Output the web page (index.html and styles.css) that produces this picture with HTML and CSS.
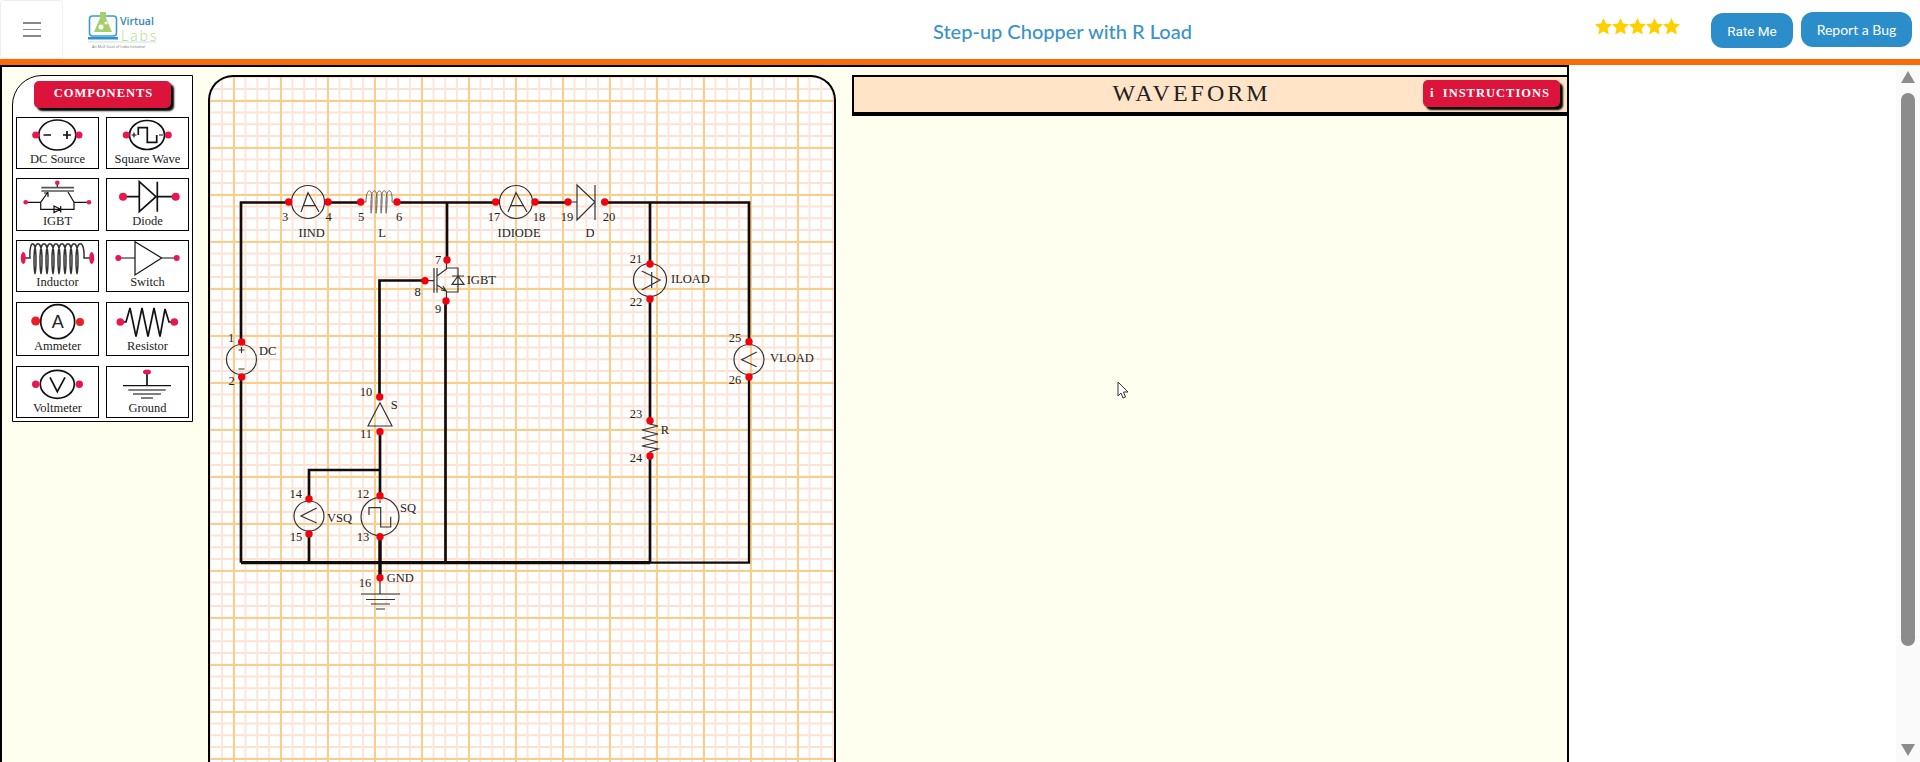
FILE: index.html
```html
<!DOCTYPE html>
<html lang="en">
<head>
    <meta charset="UTF-8">
    <title>Step-up Chopper with R Load</title>
    <link rel="stylesheet" href="styles.css">
</head>
<body>
    <header class="navbar">
        <button class="toggler" aria-label="Menu"><span></span><span></span><span></span></button>
        <svg class="logo" viewBox="86 9 72 40" width="72" height="40">
            <rect x="89.5" y="15" width="27" height="20" rx="3" fill="none" stroke="#3a9dd2" stroke-width="1.6"/>
            <path d="M100 11 H106 V17 L112 31 H94 L100 17 Z" fill="#a5cf6a"/>
            <circle cx="101" cy="26" r="2.5" fill="#fff"/>
            <circle cx="106" cy="22" r="1.5" fill="#fff"/>
            <rect x="88" y="36" width="30" height="2.5" fill="#2f93cb"/>
            <line x1="88" y1="41" x2="156" y2="41" stroke="#cfe3ea"/>
            <text x="120" y="24" class="logo-virtual">Virtual</text>
            <text x="121" y="39.5" class="logo-labs">Labs</text>
            <text x="92" y="47" class="logo-tag">An MoE Govt of India Initiative</text>
        </svg>
        <div class="title">Step-up Chopper with R Load</div>
        <svg class="stars" viewBox="0 0 85 17" width="85" height="17">
            <defs><polygon id="star" points="8.5,0 11,5.6 17,6.3 12.5,10.4 13.8,16.5 8.5,13.4 3.2,16.5 4.5,10.4 0,6.3 6,5.6"/></defs>
            <use href="#star" x="0"/><use href="#star" x="17"/><use href="#star" x="34"/><use href="#star" x="51"/><use href="#star" x="68"/>
        </svg>
        <a class="pill rate">Rate Me</a>
        <a class="pill bug">Report a Bug</a>
    </header>

    <div class="page">
        <main class="sim">
            <aside class="components">
                <button class="red-btn comp-btn">COMPONENTS</button>
                <div class="tiles">
                    <div class="tile">
                        <svg viewBox="0 0 81 38">
                            <ellipse cx="40.3" cy="17" rx="18.5" ry="15" class="ico"/>
                            <circle cx="18.7" cy="17" r="3.5" class="pin"/><circle cx="62" cy="17" r="3.5" class="pin"/>
                            <path d="M26.5 17 H34 M46 17 H54 M50 13 V21" class="ico"/>
                        </svg>
                        <span>DC Source</span>
                    </div>
                    <div class="tile">
                        <svg viewBox="0 0 81 38">
                            <ellipse cx="40" cy="17" rx="17.5" ry="14.5" class="ico"/>
                            <circle cx="19.3" cy="17" r="3.5" class="pin"/><circle cx="61.3" cy="17" r="3.5" class="pin"/>
                            <path d="M31.3 17 V9.7 H40.3 V24.3 H49.7 V17" class="ico"/>
                            <path d="M24.5 17 H29.5 M27 14.5 V19.5 M52 17 H56" class="ico thin"/>
                        </svg>
                        <span>Square Wave</span>
                    </div>
                    <div class="tile">
                        <svg viewBox="0 0 81 38">
                            <path d="M40.3 4 V8 M8.7 23.3 H23.7 L31 13 M23.7 23.3 V30.3 H57 V23.3 H72 M57 23.3 L51 13 M37 27 L43.7 30.3 L37 33.6 Z M43.7 27 V33.6 M27 14 H31 V18" class="ico thin"/>
                            <path d="M24.3 8.7 H57 M24.3 12 H57" class="bar"/>
                            <circle cx="40.3" cy="3.7" r="2.3" class="pin"/><circle cx="8.7" cy="23.3" r="2.3" class="pin"/><circle cx="72" cy="23.3" r="2.3" class="pin"/>
                        </svg>
                        <span>IGBT</span>
                    </div>
                    <div class="tile">
                        <svg viewBox="0 0 81 38">
                            <path d="M16 17.7 H32.3 M50.3 17.7 H68.7 M50.3 2.7 V32.7 M32.3 2.7 L49 17.7 L32.3 32.7 Z" class="ico"/>
                            <circle cx="16" cy="17.7" r="4" class="pin"/><circle cx="68.7" cy="17.7" r="4" class="pin"/>
                        </svg>
                        <span>Diode</span>
                    </div>
                    <div class="tile">
                        <svg viewBox="0 0 81 38">
                            <path d="M8 17 H13 C12 -2 19 -2 19 17 C19 38 17 38 17 17 C17 -2 25 -2 25 17 C25 38 23 38 23 17 C23 -2 31 -2 31 17 C31 38 29 38 29 17 C29 -2 37 -2 37 17 C37 38 35 38 35 17 C35 -2 43 -2 43 17 C43 38 41 38 41 17 C41 -2 49 -2 49 17 C49 38 47 38 47 17 C47 -2 55 -2 55 17 C55 38 53 38 53 17 C53 -2 61 -2 61 17 C61 38 59 38 59 17 C59 -2 68 -2 67 17 H73" class="ico coil"/>
                            <ellipse cx="6.3" cy="17" rx="2.5" ry="6" class="pin"/><ellipse cx="74.7" cy="17" rx="2.5" ry="6" class="pin"/>
                        </svg>
                        <span>Inductor</span>
                    </div>
                    <div class="tile">
                        <svg viewBox="0 0 81 38">
                            <path d="M11.3 17 H28 M54.7 17 H69.7 M28 0.7 L54.7 17 L28 34 Z" class="ico thin"/>
                            <circle cx="11.3" cy="17" r="3" class="pin"/><circle cx="69.7" cy="17" r="3" class="pin"/>
                        </svg>
                        <span>Switch</span>
                    </div>
                    <div class="tile">
                        <svg viewBox="0 0 81 38">
                            <circle cx="40.7" cy="18.7" r="17" class="ico"/>
                            <text x="40.7" y="25" class="ammeter-a">A</text>
                            <circle cx="18.7" cy="18" r="4.5" class="pin red"/><circle cx="63" cy="19" r="4" class="pin red"/>
                        </svg>
                        <span>Ammeter</span>
                    </div>
                    <div class="tile">
                        <svg viewBox="0 0 81 38">
                            <path d="M13.3 19 H19 L23 5 L29 33.7 L35 5 L41 33.7 L47 5 L53 33.7 L58 6 L62 19 H67" class="ico"/>
                            <circle cx="13.3" cy="19" r="3.8" class="pin"/><circle cx="67.3" cy="19" r="3.8" class="pin"/>
                        </svg>
                        <span>Resistor</span>
                    </div>
                    <div class="tile">
                        <svg viewBox="0 0 81 38">
                            <ellipse cx="40.3" cy="17.3" rx="17" ry="14" class="ico"/>
                            <path d="M33 10.3 L40.3 24.7 L48 10.3" class="ico"/>
                            <circle cx="18.7" cy="17.3" r="3.7" class="pin"/><circle cx="62.3" cy="17.3" r="3.7" class="pin"/>
                        </svg>
                        <span>Voltmeter</span>
                    </div>
                    <div class="tile">
                        <svg viewBox="0 0 81 38">
                            <path d="M40 5 V18.7" class="ico"/>
                            <path d="M16 18.7 H64" class="ico thin"/>
                            <path d="M21.3 23 H58.7 M26 27 H54 M34 31 H46" class="bar"/>
                            <ellipse cx="40" cy="5" rx="4" ry="2.5" class="pin"/>
                        </svg>
                        <span>Ground</span>
                    </div>
                </div>
            </aside>

            <section class="canvas">
                <svg class="circuit" viewBox="210 77 623 685" width="623" height="685">
                    <!-- wires -->
                    <path d="M288 202.5 H241 V342 M241 377 V562.7 M328 202.5 H361 M397 202.5 H496 M535 202.5 H568 M604 202.5 H749 V342 M447 202.5 V260 M425 280.5 H379.5 V397 M445.5 301 V562.7 M650 202.5 V264 M650 299 V421 M650 456 V562.7 M380 432 V496 M380 470 H309 V499 M309 534 V562.7" class="wire"/>
                    <path d="M241 562.7 H650" class="wire heavy"/>
                    <path d="M650 562.7 H749 V377" class="wire slim"/>
                    <path d="M380 537 V578" class="wire thick"/>
                    <path d="M380 578 V594" class="sym"/>

                    <!-- ammeters -->
                    <circle cx="308" cy="202" r="16.5" class="sym"/>
                    <path d="M301 212 L308 192.7 L319 212 M303 205.7 H316" class="sym"/>
                    <circle cx="516" cy="202" r="16.5" class="sym"/>
                    <path d="M508 212 L516 192.7 L527 212 M510 205.7 H524" class="sym"/>
                    <circle cx="650" cy="280" r="16.5" class="sym"/>
                    <path d="M641.7 271 L660 280 L641.7 290 M651.7 272 V288" class="sym"/>

                    <!-- inductor -->
                    <path d="M361 202 H366 c0 -15 7 -15 6 0 c-0.5 15 -1.5 15 -1 0 c0 -15 7 -15 6 0 c-0.5 15 -1.5 15 -1 0 c0 -15 7 -15 6 0 c-0.5 15 -1.5 15 -1 0 c0 -15 7 -15 6 0 c-0.5 15 -1.5 15 -1 0 c0 -15 7 -15 6 0 H397" class="sym coil-s"/>

                    <!-- diode -->
                    <path d="M577 185 L595 202 L577 220 Z M595 185 V220 M568 202 H577" class="sym"/>

                    <!-- igbt -->
                    <path d="M425 280.7 H434 M434 268 V292.7 M437 268 V292.7 M437 276 L446.5 269 V260 M437 285 L446.5 291 V301 M446.5 268 H458 V292 H446.5 M458 268 V292 M452 276 H464 M452 284.3 H464 L458 276 Z M441 290 L446 291 L443 286" class="sym"/>

                    <!-- dc source -->
                    <circle cx="241.5" cy="359.5" r="15" class="sym"/>
                    <path d="M238.5 350 H244.5 M241.5 347 V353 M238.5 369 H244.5" class="sym"/>

                    <!-- voltmeters -->
                    <circle cx="749" cy="359.5" r="15" class="sym"/>
                    <path d="M756.7 352 L741.7 359.7 L756.7 366.7" class="sym"/>
                    <circle cx="309" cy="516" r="15" class="sym"/>
                    <path d="M316.7 508 L301 516 L316.7 523" class="sym"/>

                    <!-- switch -->
                    <path d="M380 402.7 L392 426 H368 Z" class="sym"/>

                    <!-- square wave -->
                    <circle cx="380" cy="516.7" r="19" class="sym"/>
                    <path d="M369 515 V507.7 H380.7 V527 H390.7 V516.7 M380 500.5 V503" class="sym"/>

                    <!-- resistor -->
                    <path d="M650 421 V424 L658 426 L642 430 L658 434 L642 438 L658 442 L642 446 L658 449 L650 452 V456" class="sym"/>

                    <!-- ground -->
                    <path d="M361 594 H400 M366 599.5 H395 M371 604 H390 M376 609 H385" class="sym"/>

                    <!-- terminals -->
                    <g class="node">
                        <circle cx="241.7" cy="342" r="3.7"/><circle cx="241.7" cy="377" r="3.7"/>
                        <circle cx="288.7" cy="202" r="3.7"/><circle cx="328" cy="202" r="3.7"/>
                        <circle cx="360.7" cy="202" r="3.7"/><circle cx="397" cy="202" r="3.7"/>
                        <circle cx="447" cy="260" r="3.7"/><circle cx="425" cy="280.7" r="3.7"/><circle cx="446" cy="301" r="3.7"/>
                        <circle cx="379.7" cy="397" r="3.7"/><circle cx="380" cy="431.7" r="3.7"/>
                        <circle cx="380" cy="495.7" r="3.7"/><circle cx="380" cy="536.7" r="3.7"/>
                        <circle cx="309" cy="499" r="3.7"/><circle cx="309" cy="534" r="3.7"/>
                        <circle cx="380" cy="577.7" r="3.7"/>
                        <circle cx="495.7" cy="202" r="3.7"/><circle cx="535" cy="202" r="3.7"/>
                        <circle cx="568" cy="202" r="3.7"/><circle cx="604.7" cy="202" r="3.7"/>
                        <circle cx="650" cy="264" r="3.7"/><circle cx="650" cy="299" r="3.7"/>
                        <circle cx="650" cy="420.7" r="3.7"/><circle cx="650" cy="456" r="3.7"/>
                        <circle cx="749" cy="341.7" r="3.7"/><circle cx="749" cy="377" r="3.7"/>
                    </g>

                    <!-- terminal numbers and names -->
                    <g class="lbl mid">
                        <text x="231" y="342">1</text><text x="231.7" y="385">2</text>
                        <text x="285" y="220.7">3</text><text x="328.7" y="220.7">4</text>
                        <text x="361" y="220.7">5</text><text x="399" y="220.7">6</text>
                        <text x="438" y="264">7</text><text x="417.7" y="296">8</text><text x="438" y="312.7">9</text>
                        <text x="366" y="396">10</text><text x="366" y="438">11</text>
                        <text x="363" y="498">12</text><text x="363" y="540.7">13</text>
                        <text x="295.7" y="498">14</text><text x="296" y="540.7">15</text>
                        <text x="365" y="587">16</text>
                        <text x="494" y="220.7">17</text><text x="539" y="220.7">18</text>
                        <text x="567" y="220.7">19</text><text x="609" y="220.7">20</text>
                        <text x="636" y="263">21</text><text x="636" y="306">22</text>
                        <text x="636" y="418">23</text><text x="636" y="462">24</text>
                        <text x="735" y="342">25</text><text x="735" y="384">26</text>
                        <text x="311.7" y="236.7">IIND</text><text x="382" y="236.7">L</text>
                        <text x="519" y="236.7">IDIODE</text><text x="590" y="236.7">D</text>
                    </g>
                    <g class="lbl">
                        <text x="259" y="355">DC</text>
                        <text x="466.7" y="284">IGBT</text>
                        <text x="390.7" y="409">S</text>
                        <text x="327" y="522">VSQ</text>
                        <text x="400" y="511.7">SQ</text>
                        <text x="386.7" y="582">GND</text>
                        <text x="671" y="282.7">ILOAD</text>
                        <text x="660.7" y="434">R</text>
                        <text x="770" y="361.7">VLOAD</text>
                    </g>
                </svg>
            </section>

            <section class="output">
                <div class="output-head">
                    <h2>WAVEFORM</h2>
                    <button class="red-btn instr-btn"><i>i</i> INSTRUCTIONS</button>
                </div>
                <svg class="cursor" viewBox="0 0 12 18" width="12" height="18">
                    <path d="M1 1 V15 L4 12 L6 17 L8.5 16 L6.5 11 H11 Z" fill="#fff" stroke="#333"/>
                </svg>
            </section>
        </main>

        <div class="scrollbar">
            <svg viewBox="0 0 14 12" width="14" height="12"><path d="M7 0 L14 12 H0 Z" fill="#8c8c8c"/></svg>
            <div class="thumb"></div>
            <svg class="down" viewBox="0 0 14 12" width="14" height="12"><path d="M0 0 H14 L7 12 Z" fill="#8c8c8c"/></svg>
        </div>
    </div>
</body>
</html>
```

FILE: styles.css
```css
* {
    box-sizing: border-box;
}
html, body {
    margin: 0;
    height: 100%;
    overflow: hidden;
}
body {
    display: flex;
    flex-direction: column;
    background: #fff;
    font-family: "Liberation Serif", serif;
}

/* top bar */
.navbar {
    display: flex;
    align-items: center;
    flex: none;
    height: 65px;
    padding-right: 8px;
    background: #fff;
    border-bottom: 6px solid #f96a0a;
    font-family: Lato, "Open Sans", sans-serif;
}
.toggler {
    display: flex;
    flex-direction: column;
    justify-content: center;
    align-items: center;
    gap: 5px;
    width: 63px;
    height: 59px;
    padding: 0;
    background: #fff;
    border: 1px solid #eee;
    border-radius: 4px;
}
.toggler span {
    width: 18px;
    height: 1.5px;
    background: #888;
}
.logo {
    flex: none;
    margin-left: 23px;
    overflow: visible;
}
.logo-virtual {
    font: 600 10.5px "Open Sans", sans-serif;
    fill: #3586b8;
}
.logo-labs {
    font: 300 14px "Open Sans", sans-serif;
    letter-spacing: 2px;
    fill: #b6d98a;
}
.logo-tag {
    font: 3.8px "Open Sans", sans-serif;
    fill: #777;
}
.title {
    flex: none;
    margin-left: 775px;
    margin-top: 3px;
    font-size: 20px;
    font-weight: 500;
    color: #3a93c8;
}
.stars {
    flex: none;
    margin-left: auto;
    margin-right: 31px;
    margin-bottom: 7px;
    fill: #ffd000;
}
.pill {
    display: flex;
    align-items: center;
    justify-content: center;
    height: 35px;
    background: #2b8ecb;
    border-radius: 12px;
    color: #fff;
    font-size: 14px;
}
.rate {
    width: 82px;
    margin-top: 2px;
    margin-right: 8px;
    font-family: Roboto, sans-serif;
    font-size: 13.5px;
}
.bug {
    width: 111px;
}

/* simulator area */
.page {
    display: flex;
    flex: 1;
    min-height: 0;
}
.sim {
    display: flex;
    align-items: flex-start;
    width: 1569px;
    padding: 8px 0 0 10px;
    background: #fffff0;
    border: 2px solid #000;
    border-bottom: none;
}
.red-btn {
    display: block;
    padding: 0 0 2px;
    background: #dc143c;
    border: none;
    border-radius: 5px;
    box-shadow: 3px 3px 2px #000;
    color: #fff;
    font-family: "Liberation Serif", serif;
    font-size: 12.5px;
    font-weight: bold;
    letter-spacing: 1px;
}

.components {
    flex: none;
    width: 181px;
    height: 347px;
    padding: 5px 3px 0;
    background: #fff;
    border: 1px solid #000;
    border-top-left-radius: 30px;
}
.comp-btn {
    width: 137px;
    height: 27px;
    margin: 0 auto 9px;
    padding-left: 2px;
}
.tiles {
    display: grid;
    grid-template-columns: 83px 83px;
    grid-template-rows: 52px 53px 53px 55px 52px;
    gap: 9px 7px;
}
.tile {
    display: flex;
    flex-direction: column;
    align-items: center;
    border: 1px solid #000;
    background: #fff;
    font-size: 12.5px;
    color: #222;
}
.tile:nth-child(n+5):nth-child(-n+8) {
    margin-bottom: 1px;
}
.tile svg {
    flex: none;
    width: 81px;
    height: 38px;
    margin-bottom: -5px;
    overflow: visible;
}
.tile span {
    margin-top: auto;
    padding-bottom: 1.5px;
    line-height: 15px;
}
.ico {
    fill: none;
    stroke: #111;
    stroke-width: 1.7;
}
.ico.thin {
    stroke-width: 1.2;
}
.ico.coil {
    stroke: #333;
    stroke-width: 1.5;
}
.bar {
    fill: none;
    stroke: #555;
    stroke-width: 1.7;
}
.pin {
    fill: #ea1650;
}
.pin.red {
    fill: #ee1c25;
}
.ammeter-a {
    font: 18px "Liberation Sans", sans-serif;
    text-anchor: middle;
    fill: #222;
}

.canvas {
    flex: none;
    width: 628px;
    height: 720px;
    margin-left: 15px;
    border: 2px solid #000;
    border-bottom: none;
    border-radius: 25px 25px 0 0;
    overflow: hidden;
    background-color: #fff;
    background-image:
        linear-gradient(to right, #f7cf8a 1.5px, transparent 1.5px),
        linear-gradient(to bottom, #f7cf8a 1.5px, transparent 1.5px),
        linear-gradient(to right, #fbe6da 1.5px, transparent 1.5px),
        linear-gradient(to bottom, #fbe2d3 1.5px, transparent 1.5px);
    background-size: 47px 47px, 47px 47px, 11.75px 11.75px, 11.75px 11.75px;
    background-position: 23px 23px, 23px 23px, 11px 11px, 11px 11px;
}
.circuit {
    display: block;
}
.wire {
    fill: none;
    stroke: #140a08;
    stroke-width: 2.7;
}
.wire.slim {
    stroke-width: 2.3;
}
.wire.heavy {
    stroke-width: 3.2;
}
.wire.thick {
    stroke-width: 3.5;
}
.sym {
    fill: none;
    stroke: #333;
    stroke-width: 1.2;
}
.coil-s {
    stroke: #666;
    stroke-width: 1;
}
.node {
    fill: #f2000c;
}
.lbl {
    font-size: 12.5px;
    fill: #222;
}
.mid {
    text-anchor: middle;
}

.output {
    position: relative;
    flex: none;
    width: 715px;
    margin-left: 16px;
    align-self: stretch;
}
.output-head {
    position: relative;
    height: 41px;
    background: #ffe4c8;
    border: 2px solid #000;
    border-right: none;
    border-bottom-width: 4px;
}
.output-head h2 {
    margin: 0;
    padding-right: 38px;
    font-size: 24px;
    font-weight: normal;
    letter-spacing: 3px;
    line-height: 32px;
    text-align: center;
    color: #222;
}
.instr-btn {
    position: absolute;
    top: 3px;
    right: 7px;
    width: 137px;
    height: 27px;
    padding-right: 3px;
}
.instr-btn i {
    margin-right: 4px;
    font-style: normal;
    font-size: 13px;
}
.cursor {
    position: absolute;
    left: 265px;
    top: 306px;
}

/* page scrollbar */
.scrollbar {
    display: flex;
    flex-direction: column;
    align-items: center;
    flex: none;
    width: 24px;
    margin-left: auto;
    padding-top: 6px;
    background: #fafafa;
}
.thumb {
    width: 14px;
    height: 553px;
    margin-top: 10px;
    background: #8c8c8c;
    border-radius: 7px;
}
.scrollbar .down {
    margin-top: 98px;
}
```
